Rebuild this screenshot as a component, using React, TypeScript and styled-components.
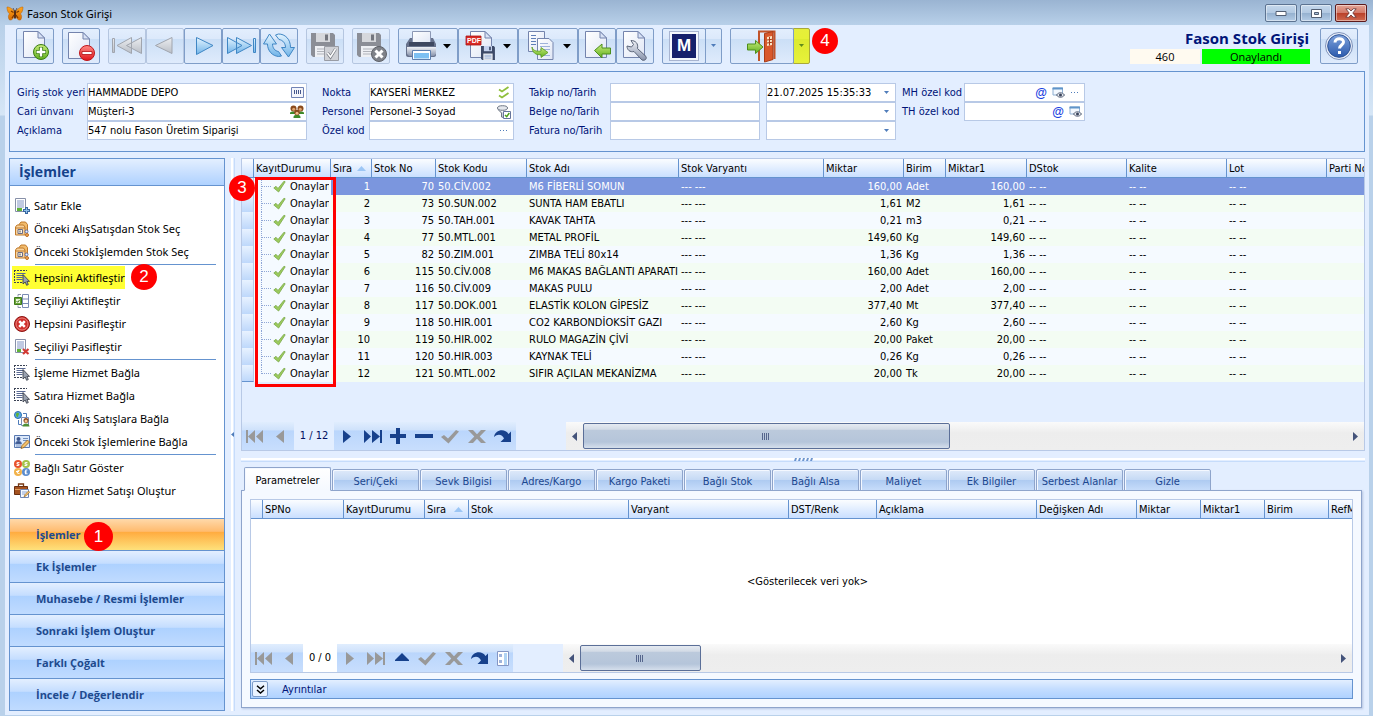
import React from "react";
import styled, { createGlobalStyle, css } from "styled-components";

const TAHOMA = '"DejaVu Sans Condensed", "DejaVu Sans", sans-serif';
const SEGOE = '"Open Sans", "Noto Sans", sans-serif';
const SEGOE_WIDE = '"Noto Sans", "Open Sans", sans-serif';
const LINE = "#6593cf";
const SOFT = "#b8c9e6";

const GlobalStyle = createGlobalStyle`
  *, *::before, *::after { box-sizing: border-box; }
  body { margin: 0; font: 11px/17px ${TAHOMA}; color: #000; background: #b9d1ea; }
  button, input { font: inherit; color: inherit; margin: 0; padding: 0; border: 0; background: none; border-radius: 0; }
  button { display: flex; align-items: center; justify-content: center; cursor: default; }
  svg { display: block; flex: none; }
`;

/* ---------- window frame ---------- */

const Window = styled.div`
  min-height: 100vh;
  display: flex;
  flex-direction: column;
  padding: 0 4px 1px 5px;
  background: linear-gradient(#b8d0e9 25px, #d6e6f6 115px, #b9d1ea 116px);
`;

const TitleBar = styled.header`
  height: 25px;
  flex: none;
  display: flex;
  align-items: flex-start;
  margin: 0 -4px 0 -5px;
  padding: 4px 6px 0 6px;
  gap: 3px;
  font: 11px/20px ${SEGOE_WIDE};
  background: linear-gradient(#9ab4d2, #b8d0e9);
  & > svg { margin-top: 2px; }
`;

const TitleText = styled.span`
  flex: 1;
`;

const WindowButton = styled.button<{ $close?: boolean }>`
  width: 32px;
  height: 18px;
  border: 1px solid ${(p) => (p.$close ? "#5c1a1c" : "#5c7391")};
  border-radius: 2px;
  box-shadow: inset 0 0 0 1px rgba(255, 255, 255, 0.45);
  background: ${(p) =>
    p.$close
      ? "linear-gradient(#e3a597, #d37a69 48%, #b93f28 50%, #cf6a50)"
      : "linear-gradient(#c5d8ec, #b2c9e2 48%, #94b0cf 50%, #b4cce6)"};
`;

const Body = styled.div`
  flex: 1;
  display: flex;
  flex-direction: column;
  background: #e3eeff;
`;

/* ---------- toolbar ---------- */

const Toolbar = styled.div`
  display: flex;
  align-items: flex-start;
  gap: 8px;
  padding: 3px 11px 7px 11px;
`;

const Group = styled.div`
  display: flex;
`;

const ToolButton = styled.button<{ $width?: number; $dim?: boolean }>`
  position: relative;
  width: ${(p) => p.$width ?? 38}px;
  height: 36px;
  justify-content: flex-start;
  border: 1px solid ${(p) => (p.$dim ? "#b5c6e0" : "#7f9dc8")};
  border-radius: 2px;
  background: linear-gradient(#e3eefd, #dce9fb 28%, #cbdff6 30%, #dfebfc);
`;

const Split = styled.button<{ $marked?: boolean }>`
  width: 17px;
  height: 36px;
  margin-left: -1px;
  border: 1px solid #7f9dc8;
  border-radius: 0 2px 2px 0;
  background: linear-gradient(#e3eefd, #dce9fb 28%, #cbdff6 30%, #dfebfc);
  ${(p) =>
    p.$marked &&
    css`
      border-color: #a9a83a;
      background: linear-gradient(#e6ef3a, #e6f036 28%, #dcea30 30%, #e8f23a);
    `}
`;

const LogoM = styled.span`
  margin-left: 6px;
  width: 30px;
  height: 30px;
  border: 1px solid #a8b4d0;
  box-shadow: inset 0 0 0 2px #f4f7fd;
  background: #16206c;
  color: #fff;
  font: bold 17px/28px "Liberation Sans", sans-serif;
  text-align: center;
`;

const DocInfo = styled.div`
  margin-left: auto;
  margin-right: 2px;
  display: grid;
  grid-template-columns: 70px 108px;
  column-gap: 2px;
  font: 11px/15px ${SEGOE};
  text-align: center;
`;

const DocTitle = styled.h1`
  grid-column: 1 / 3;
  margin: 0;
  padding-right: 1px;
  text-align: right;
  color: #001478;
  font: bold 15px/21px ${SEGOE};
`;

const DocNo = styled.span`
  background: #fffaf0;
`;

const DocState = styled.span`
  background: #00ff00;
`;

/* ---------- form ---------- */

const FormPanel = styled.form`
  margin: 0 4px 0 4px;
  height: 81px;
  padding: 11px 7px;
  display: flex;
  align-items: flex-start;
  border: 1px solid ${LINE};
`;

const FieldBlock = styled.div<{ $label: number; $gap: number }>`
  display: grid;
  grid-template-columns: ${(p) => p.$label}px auto;
  grid-auto-rows: 19px;
  align-items: center;
  margin-right: ${(p) => p.$gap}px;
  color: #001478;
  white-space: nowrap;
`;

const Box = styled.div<{ $width: number }>`
  width: ${(p) => p.$width}px;
  height: 19px;
  display: flex;
  align-items: center;
  gap: 1px;
  padding-right: 1px;
  border: 1px solid ${SOFT};
  background: #fff;
  color: #000;
`;

const BoxInput = styled.input`
  flex: 1;
  min-width: 0;
  height: 17px;
  outline: none;
`;

const BoxButton = styled.button`
  width: 16px;
  height: 16px;
  color: #2547d8;
`;

const DateCol = styled.div`
  display: grid;
  grid-auto-rows: 19px;
  margin-right: 6px;
`;

/* ---------- lower half ---------- */

const Workspace = styled.main`
  flex: 1;
  display: flex;
  padding: 6px 4px 4px 4px;
`;

const Sidebar = styled.nav`
  width: 216px;
  flex: none;
  display: flex;
  flex-direction: column;
  border: 1px solid ${LINE};
  background: #fff;
`;

const SidebarTitle = styled.h2`
  margin: 0;
  height: 27px;
  flex: none;
  padding-left: 9px;
  border-bottom: 1px solid ${LINE};
  background: linear-gradient(#e3efff, #c4ddff 60%, #afd2ff);
  color: #15428b;
  font: bold 14px/26px ${SEGOE};
`;

const SidebarList = styled.ul`
  flex: 1;
  margin: 0;
  padding: 8px 0 16px;
  list-style: none;
`;

const SidebarItem = styled.li<{ $divided?: boolean }>`
  position: relative;
  margin-top: ${(p) => (p.$divided ? 3 : 0)}px;
  padding-left: 2px;
  display: flex;
  ${(p) =>
    p.$divided &&
    css`
      &::before {
        content: "";
        position: absolute;
        left: 25px;
        right: 8px;
        top: -2px;
        border-top: 1px solid ${LINE};
      }
    `}
`;

const SidebarAction = styled.button<{ $marked?: boolean }>`
  height: 23px;
  gap: 4px;
  padding: 0 0 0 2px;
  font: 11px/23px ${SEGOE_WIDE};
  white-space: nowrap;
  background: ${(p) => (p.$marked ? "#ffff33" : "none")};
`;

const SectionButton = styled.button<{ $active?: boolean }>`
  height: 32px;
  flex: none;
  justify-content: flex-start;
  padding-left: 26px;
  border-top: 1px solid ${LINE};
  color: #1e4a8e;
  font: bold 11px/31px ${SEGOE};
  background: ${(p) =>
    p.$active
      ? "linear-gradient(#ffd9aa, #ffbb6e 40%, #ffab3f 42%, #fee17b)"
      : "linear-gradient(#e3efff, #c4ddff 40%, #add1ff 42%, #c0dbff)"};
`;

const Badge = styled.span<{ $size?: number }>`
  position: absolute;
  z-index: 2;
  width: ${(p) => p.$size ?? 26}px;
  height: ${(p) => p.$size ?? 26}px;
  border-radius: 50%;
  background: #ff0000;
  color: #fff;
  font: 17px/26px "Liberation Sans", sans-serif;
  text-align: center;
`;
const BadgeSection = styled(Badge)`
  left: 74px;
  top: 4px;
  line-height: 29px;
`;
const BadgeItem = styled(Badge)`
  left: 121px;
  top: -2px;
`;
const BadgeGrid = styled(Badge)`
  left: -13px;
  top: 16px;
`;
const BadgeExit = styled(Badge)`
  left: 82px;
  top: 0;
`;
const Anchor = styled.div`
  position: relative;
  display: flex;
  & > ${SectionButton} { flex: 1; }
`;

const SplitterV = styled.div`
  width: 16px;
  flex: none;
  display: flex;
  align-items: center;
  padding-left: 6px;
  background: linear-gradient(#fff, #fff) 6px 0 / 2px 100% no-repeat,
    linear-gradient(#c6dcfb, #c6dcfb) 9px 0 / 1px 100% no-repeat;
`;

const Content = styled.section`
  flex: 1;
  min-width: 0;
  display: flex;
  flex-direction: column;
  padding-bottom: 3px;
`;

const GridPanel = styled.div`
  position: relative;
  display: flex;
  flex-direction: column;
  border: 1px solid ${SOFT};
`;

const Table = styled.table`
  width: 100%;
  table-layout: fixed;
  border-collapse: separate;
  border-spacing: 0;
`;

const Th = styled.th`
  height: 19px;
  padding: 1px 2px 0 2px;
  overflow: hidden;
  white-space: nowrap;
  text-align: left;
  font-weight: normal;
  line-height: 17px;
  border-bottom: 1px solid ${LINE};
  border-right: 1px solid ${LINE};
  background: linear-gradient(#fbfdff, #e2eeff 50%, #c9dfff);
  &:last-child { border-right: 0; padding-right: 0; }
  & > div { display: flex; align-items: center; justify-content: space-between; padding-right: 3px; }
`;

const Td = styled.td<{ $right?: boolean; $plain?: boolean }>`
  height: 17px;
  padding: 1px 2px 0;
  line-height: 16px;
  overflow: hidden;
  white-space: nowrap;
  text-align: ${(p) => (p.$right ? "right" : "left")};
  ${(p) => p.$plain && css`&&&&& { background: #f5faff; color: #000; padding: 0 2px 0 0; }`}
`;

const Indicator = styled.td`
  padding: 0;
  border-right: 1px solid ${SOFT};
  background: linear-gradient(#e8f2ff, #bed8fb);
`;

const Row = styled.tr<{ $selected?: boolean }>`
  &:nth-child(odd) ${Td} { background: #f5faff; }
  &:nth-child(even) ${Td} { background: #f3fcf3; }
  ${(p) => p.$selected && css`&& ${Td} { background: #7b96de; color: #fff; }`}
  &:last-child ${Indicator} { border-bottom: 1px solid ${LINE}; }
`;

const StatusCell = styled.div`
  display: flex;
  align-items: center;
  height: 17px;
  overflow: hidden;
`;

const StatusText = styled.span`
  padding: 1px 0 0 3px;
`;

const MarkFrame = styled.div`
  position: absolute;
  left: 13px;
  top: 18px;
  width: 81px;
  height: 210px;
  border: 3px solid #ff0000;
`;

const Spacer = styled.div`
  height: 40px;
`;

const Navigator = styled.div`
  display: flex;
  height: 28px;
  flex: none;
`;

const NavSlot = styled.button<{ $width?: number; $on?: boolean }>`
  width: ${(p) => p.$width ?? 26}px;
  height: 100%;
  color: ${(p) => (p.$on ? "#17418c" : "#999999")};
  background: linear-gradient(#e0edfe, #cfe2fb 28%, #bad6fc 32%, #c8defd);
`;

const NavLabel = styled.span<{ $width: number; $white?: boolean }>`
  width: ${(p) => p.$width}px;
  line-height: 28px;
  text-align: center;
  background: ${(p) => (p.$white ? "#fff" : "#e3eeff")};
  color: ${(p) => (p.$white ? "#000" : "#001060")};
`;

const ScrollTrack = styled.div`
  flex: 1;
  margin-left: 50px;
  display: flex;
  background: linear-gradient(#fafafa, #ededed 40%, #eeeeee);
`;

const ScrollArrow = styled.button`
  width: 17px;
  flex: none;
  color: #44537a;
`;

const ScrollRun = styled.div`
  flex: 1;
  display: flex;
  padding: 1px 0;
`;

const Thumb = styled.div<{ $size: number }>`
  width: ${(p) => p.$size}%;
  display: flex;
  align-items: center;
  justify-content: center;
  border: 1px solid #5b6f98;
  border-radius: 2px;
  background: linear-gradient(#e5eaf1, #d3dbe6 22%, #bccadc 26%, #b5c5da 75%, #d5dfec);
`;

const SplitterH = styled.div`
  height: 16px;
  flex: none;
  display: flex;
  justify-content: center;
  align-items: center;
  background: linear-gradient(#fff, #fff) 0 7px / 100% 2px no-repeat,
    linear-gradient(#c6dcfb, #c6dcfb) 0 10px / 100% 1px no-repeat;
`;

const Tabs = styled.div`
  position: relative;
  z-index: 1;
  display: flex;
  align-items: flex-end;
  gap: 1px;
  padding-left: 3px;
  margin-bottom: -1px;
`;

const Tab = styled.button<{ $active?: boolean }>`
  width: 87px;
  height: ${(p) => (p.$active ? 24 : 22)}px;
  padding-top: 2px;
  border: 1px solid #8ea4cb;
  border-bottom-color: ${(p) => (p.$active ? "#f5f9ff" : "#8ea4cb")};
  border-radius: 2px 2px 0 0;
  box-shadow: inset 1px 1px 0 #f4f8ff;
  color: ${(p) => (p.$active ? "#000" : "#1c478f")};
  background: ${(p) =>
    p.$active
      ? "linear-gradient(#ffffff, #f5f9ff)"
      : "linear-gradient(#dfeafa, #c6daf5 48%, #adcaf1 50%, #c6dcfa)"};
`;

const TabPanel = styled.div`
  flex: 1;
  display: flex;
  flex-direction: column;
  gap: 6px;
  padding: 8px;
  margin-right: 3px;
  border: 1px solid #8ea4cb;
  box-shadow: 1px 1px 2px #b4c4e0;
  background: #f5f9ff;
`;

const DetailGrid = styled(GridPanel)`
  flex: 1;
  background: #e3eeff;
`;

const EmptyArea = styled.div`
  flex: 1;
  min-height: 80px;
  display: flex;
  align-items: center;
  justify-content: center;
  padding-left: 12px;
  background: #fff;
`;

const DetailsBar = styled.div`
  height: 20px;
  flex: none;
  display: flex;
  align-items: center;
  gap: 14px;
  padding-left: 1px;
  border: 1px solid ${LINE};
  color: #001478;
  background: linear-gradient(#e3efff, #c4ddff 50%, #afd2ff);
`;

const ExpandButton = styled.button`
  width: 16px;
  height: 16px;
  border: 1px solid #7f9dc8;
  border-radius: 2px;
  background: #eaf3ff;
  color: #000;
`;

/* ---------- icons ---------- */

const DefsSvg = styled.svg`
  position: absolute;
`;

const Defs = () => (
  <DefsSvg width="0" height="0" aria-hidden="true">
    <defs>
      <linearGradient id="gPage" x1="0" y1="0" x2="1" y2="1"><stop offset="0" stopColor="#fff" /><stop offset="1" stopColor="#dfe6f5" /></linearGradient>
      <linearGradient id="gBlue" x1="0" y1="0" x2="0" y2="1"><stop offset="0" stopColor="#e4f4ff" /><stop offset="1" stopColor="#6fb3e8" /></linearGradient>
      <linearGradient id="gGrey" x1="0" y1="0" x2="0" y2="1"><stop offset="0" stopColor="#eceef1" /><stop offset="1" stopColor="#b9bec6" /></linearGradient>
      <linearGradient id="gGreen" x1="0" y1="0" x2="0" y2="1"><stop offset="0" stopColor="#c8ec7a" /><stop offset="1" stopColor="#5fae1e" /></linearGradient>
      <linearGradient id="gRed" x1="0" y1="0" x2="0" y2="1"><stop offset="0" stopColor="#ff8a84" /><stop offset="1" stopColor="#e0161c" /></linearGradient>
      <linearGradient id="gSteel" x1="0" y1="0" x2="0" y2="1"><stop offset="0" stopColor="#f0f2f7" /><stop offset="1" stopColor="#8792ab" /></linearGradient>
      <linearGradient id="gHelp" x1="0" y1="0" x2="0" y2="1"><stop offset="0" stopColor="#7ea2dc" /><stop offset="1" stopColor="#2b59ac" /></linearGradient>
      <linearGradient id="gWing" x1="0" y1="0" x2="0" y2="1"><stop offset="0" stopColor="#ffa51c" /><stop offset="1" stopColor="#d96a00" /></linearGradient>
    </defs>
  </DefsSvg>
);

const Tool = ({ w = 36, children }: { w?: number; children: React.ReactNode }) => (
  <svg width={w} height="34" viewBox={`0 0 ${w} 34`} fill="none" aria-hidden="true">{children}</svg>
);

const Sheet = ({ x = 6, y = 2 }: { x?: number; y?: number }) => (
  <g transform={`translate(${x} ${y})`}>
    <path d="M.5.5h14.5l6.500 6.500v19.500H.5z" fill="url(#gPage)" stroke="#7484ad" />
    <path d="M15 .5v6.500h6.500z" fill="#d8e2f5" stroke="#7484ad" strokeLinejoin="round" />
  </g>
);

const Floppy = ({ x = 4, y = 4, s = 1, dark }: { x?: number; y?: number; s?: number; dark?: boolean }) => (
  <g transform={`translate(${x} ${y}) scale(${s})`}>
    <path d="M0 0h22l2 2v22H2l-2-2z" fill={dark ? "#3d4a68" : "#8b8e96"} />
    <path d="M5 0h14v9H5z" fill={dark ? "#c5d3ee" : "#d6d8dc"} />
    <path d="M14 1.500h3v6h-3z" fill={dark ? "#3d4a68" : "#73767e"} />
    <path d="M4 13h16v11H4z" fill="#eef0f4" />
    <path d="M6 16h12M6 18.500h12M6 21h12" stroke={dark ? "#6e8ec8" : "#b0b3ba"} />
  </g>
);

const DropArrow = ({ x, color = "#000" }: { x: number; color?: string }) => (
  <path d={`M${x - 1} 15h8l-4 4.500z`} fill={color} />
);

const SmallDrop = ({ color = "#4f7cba" }: { color?: string }) => (
  <svg width="7" height="4" viewBox="0 0 7 4" aria-hidden="true"><path d="M1 0h5l-2.500 3z" fill={color} /></svg>
);

const Butterfly = () => (
  <svg width="18" height="16" viewBox="0 0 18 16" aria-hidden="true">
    <path d="M8.500 6.500C7.500 3.500 4 .8 1 1c0 3 .8 5.500 2.500 6.800C2 9.500 2 12 3.500 14c2.500.5 4.500-2 5-5zM9.500 6.500C10.500 3.500 14 .8 17 1c0 3-.8 5.500-2.500 6.800 1.500 1.700 1.500 4.200 0 6.200-2.500.5-4.500-2-5-5z" fill="url(#gWing)" stroke="#b85e00" strokeWidth=".5" />
    <path d="M9 4.500v8" stroke="#4a2410" strokeWidth="1.800" />
    <path d="M8.500 5 7 2M9.500 5 11 2" stroke="#4a2410" strokeWidth=".7" />
    <path d="M8 9l-2 3M10 9l2 3M7.500 6.500 5 5M10.500 6.500 13 5" stroke="#7a3600" strokeWidth="1.200" />
  </svg>
);

const LookupList = () => (
  <svg width="13" height="11" viewBox="0 0 13 11" fill="none"><path d="M.5.5h12v10H.5z" stroke="#7183b5" fill="#f4f6fc" /><path d="M3.500 3v4M5.500 3v4M7.500 3v4M9.500 3v4" stroke="#46578c" /></svg>
);
const People = () => (
  <svg width="14" height="13" viewBox="0 0 14 13" fill="none">
    <path d="M0 8c0-2 6-2 6 0v1H0zM8 8c0-2 6-2 6 0v1H8zM3.500 12c0-3 7-3 7 0v1h-7z" fill="#3f8a2a" />
    <circle cx="3.500" cy="3.500" r="3" fill="#8a4a1c" /><circle cx="10.500" cy="3.500" r="3" fill="#8a4a1c" />
    <circle cx="3.700" cy="4.300" r="1.500" fill="#e0a46c" /><circle cx="10.300" cy="4.300" r="1.500" fill="#e0a46c" />
    <circle cx="7" cy="7.500" r="2.800" fill="#8a4a1c" /><circle cx="7" cy="8.300" r="1.500" fill="#f0bd8a" />
  </svg>
);
const DoubleTick = () => (
  <svg width="12" height="13" viewBox="0 0 12 13" fill="none" stroke="#8fbf3c" strokeWidth="1.800"><path d="M1 3.500 4 5.500 10.500 1M1 9.500l3 2L10.500 7" /></svg>
);
const Funnel = () => (
  <svg width="14" height="14" viewBox="0 0 14 14" fill="none">
    <ellipse cx="5.500" cy="3" rx="5" ry="2.300" fill="#e4e7ec" stroke="#6d7684" /><path d="M1 4.500 4.500 8v4l2 .5V8" fill="#cfd4dc" stroke="#6d7684" />
    <path d="M6.500 6.500h7v7h-7z" fill="#fff" stroke="#66759c" /><path d="m8 10 1.700 1.700L12.300 8" stroke="#4fa01c" strokeWidth="1.500" />
  </svg>
);
const Dots = () => (
  <svg width="8" height="2" viewBox="0 0 8 2" fill="#4f7cba"><path d="M0 0h1v1H0zM3 0h1v1H3zM6 0h1v1H6z" /></svg>
);
const At = styled.span`
  font: bold 12px/14px "Liberation Sans", sans-serif;
  color: #1a3fe0;
`;
const WindowEye = () => (
  <svg width="13" height="11" viewBox="0 0 13 11" fill="none">
    <path d="M1 1h9.500v7H1z" fill="#f4f9ff" stroke="#8fb0d2" /><path d="M.5.5h10.500v2H.5z" fill="#5f94c9" />
    <path d="M4.500 8c2-3 6-3 8 0-2 3-6 3-8 0z" fill="#e4e8ef" stroke="#5a6478" /><circle cx="8.500" cy="8" r="1.500" fill="#39435a" />
  </svg>
);

const Small = ({ children }: { children: React.ReactNode }) => (
  <svg width="16" height="16" viewBox="0 0 16 16" fill="none" aria-hidden="true">{children}</svg>
);
const IconRowAdd = () => (
  <Small><path d="M1.500.5h10v13h-10z" fill="#fff" stroke="#8790a8" /><path d="M3 3h7M3 5h7M3 7h7M3 9h7" stroke="#8094c4" /><path d="M3 10h5v3H3z" fill="#5fb336" /><path d="M12.500 9v7M9 12.500h7" stroke="#38679f" strokeWidth="3" /><path d="M12.500 10v5M10 12.500h5" stroke="#8fc0ea" strokeWidth="1" /></Small>
);
const IconBoxes = () => (
  <Small><path d="M5 3.500 7 1h4.500l2 2.500V10H5z" fill="#f2bb6c" stroke="#c07a2a" /><path d="M1.500 6 3 4h6.500l1.500 2v8H1.500z" fill="#f9d29a" stroke="#c07a2a" /><path d="M1.500 7H11" stroke="#c07a2a" /><path d="M4 8.500h4.500v4H4z" fill="#fff6e6" stroke="#6c6c84" /><path d="M6 9.500v2" stroke="#444" /><circle cx="12.500" cy="10.500" r="1.500" fill="#e8eefc" stroke="#5a6ea8" /><circle cx="13" cy="14" r="1.500" fill="#f6a95a" stroke="#b96c20" /></Small>
);
const IconSelect = () => (
  <Small><path d="M0 .5h13" stroke="#3a4254" strokeDasharray="2 1" /><path d="M.5 0v13M0 12.500h8" stroke="#3a4254" strokeDasharray="2 1" /><path d="M2.500 3.500h9M2.500 5.500h7M2.500 7.500h6M2.500 9.500h6" stroke="#5a6a94" /><path d="M9 4.500v9.500l2.200-2 1.400 3.300 1.700-.8-1.400-3.100h2.600z" fill="#9aa2b0" stroke="#2e3440" strokeWidth=".8" /></Small>
);
const IconCheckGrid = () => (
  <Small><path d="M8.500 1.500h6v13h-6zM8.500 6h6M8.500 10.500h6" fill="#fff" stroke="#7a8cb4" /><path d="M4 3.500V1.500h3M4 12.500v2h3" stroke="#8a93a6" /><path d="M.5 4.500h7v7h-7z" fill="#6da63a" stroke="#3e7a18" /><path d="M2 6h4v4H2z" fill="#e9f5d8" /><path d="m2.500 8 1.200 1.300L5.500 7" stroke="#3e7a18" /></Small>
);
const IconCross = () => (
  <Small><circle cx="8" cy="8" r="7.500" fill="#d0302c" stroke="#8d1512" /><circle cx="8" cy="8" r="6" stroke="#f2a29c" strokeWidth=".7" /><path d="m5.200 5.200 5.600 5.600M10.800 5.200 5.200 10.800" stroke="#fff" strokeWidth="2.600" /></Small>
);
const IconRowDel = () => (
  <Small><path d="M1.500.5h10v13h-10z" fill="#fff" stroke="#8790a8" /><path d="M3 3h7M3 5h7M3 7h7M3 9h7" stroke="#8094c4" /><path d="M3 10h4v3H3z" fill="#5fb336" /><path d="m9 10 5.500 5M14.500 10 9 15" stroke="#d23a34" strokeWidth="2.200" /></Small>
);
const IconGlobeUser = () => (
  <Small><circle cx="4" cy="4" r="3.500" fill="#5aa9e6" stroke="#2c6fae" /><path d="M2 3c1-2 3-1 3 0s-1 1-1 3c-2 0-2-2-2-3z" fill="#5fb336" /><path d="M9 2.500h3.500V6M4.500 9v4.500H9" stroke="#4f7cba" /><path d="M7.500 6.500h7v8h-7z" fill="#fff" stroke="#7a8cb4" /><circle cx="12" cy="9.500" r="2.500" fill="#8a4a1c" /><circle cx="12" cy="10" r="1.500" fill="#f4c490" /><path d="M8.500 15.500c0-4 7-4 7 0z" fill="#4f8f35" /></Small>
);
const IconCardPen = () => (
  <Small><path d="M.5 1.500h15v12H.5z" fill="#dbe8fa" stroke="#5878b0" /><circle cx="4.500" cy="5" r="2" fill="#3d568c" /><path d="M1.500 10c0-4 6-4 6 0zM9 4.500h5M9 6.500h4M2 12h5" fill="#3d568c" stroke="#5878b0" strokeWidth=".8" /><path d="m7 14.500 1-3L13.500 6l2 2-5.500 5.500z" fill="#f6c26a" stroke="#8a5a1c" strokeWidth=".8" /></Small>
);
const IconCoins = () => (
  <Small><circle cx="12" cy="4" r="4" fill="#a5c24a" /><circle cx="4" cy="12" r="4" fill="#f2b24a" /><circle cx="12" cy="12" r="4" fill="#5c8ccc" /><circle cx="4" cy="4" r="4" fill="#e8512c" /><path d="M5.500 2.800c-3-1-3 1.300-1.500 1.300s1.500 2-1.500 1.200M13.500 2.800c-3-1-3 1.300-1.500 1.300s1.500 2-1.500 1.200M5.500 10.500c-3-.5-3 3.500 0 3M2 11.500h3M13.300 10.200c-1.800-1-2 1-1.800 3.500h2M10.500 12h2.500" stroke="#fff" strokeWidth="1.100" /></Small>
);
const IconBriefcase = () => (
  <Small><path d="M4.500 3V1h5v2" stroke="#7a3a14" strokeWidth="1.300" /><path d="M.5 3.500h13v8H.5z" fill="#a4521f" stroke="#6a2f10" /><path d="M1 6.500h12" stroke="#e0a060" /><path d="M6.500 6.500h8v8h-8z" fill="#f5f9ff" stroke="#6f86b4" /><path d="M8 9h5M8 11h3" stroke="#8ca4d0" /><path d="m10 14 1-2.500L14.500 8l1.200 1.200-3.500 3.500z" fill="#f6c26a" stroke="#8a5a1c" strokeWidth=".6" /></Small>
);

const Tick = () => (
  <svg width="14" height="13" viewBox="0 0 14 13" aria-hidden="true"><path d="M.8 8 3 6.300 5 8.500 11 1.200l1.200.6L5.600 12z" fill="#9ccb5c" stroke="#7aa84a" strokeWidth=".8" /></svg>
);
const Branch = ({ last }: { last: boolean }) => (
  <svg width="19" height="17" viewBox="0 0 19 17" fill="none" aria-hidden="true"><path d={`M7.500 0v${last ? 9 : 17}M8 8.500h9`} stroke="#8fa6d6" strokeDasharray="1 1" /></svg>
);
const SortUp = () => (
  <svg width="9" height="5" viewBox="0 0 9 5" aria-hidden="true"><path d="M4.500 0 9 5H0z" fill="#9cc6f5" /></svg>
);

const glyphs: Record<string, React.ReactNode> = {
  first: <path d="M1 2h2v13H1zM10 2v13L3 8.500zM18 2v13l-7-6.500z" fill="currentColor" />,
  prev: <path d="M13 2v13L5 8.500z" fill="currentColor" />,
  next: <path d="M6 2v13l8-6.500z" fill="currentColor" />,
  last: <path d="M17 2h2v13h-2zM1 2v13l7-6.500zM9 2v13l8-6.500z" fill="currentColor" />,
  plus: <path d="M7 0h4v6h6v4h-6v6H7v-6H1V6h6z" fill="currentColor" />,
  minus: <path d="M0 6h18v4H0z" fill="currentColor" />,
  up: <path d="M10 3l7 7v1H3v-1z" fill="currentColor" />,
  ok: <path d="M0 9l3-2 4 3.500L15 2l3 1.500L7.500 15.500z" fill="currentColor" />,
  cancel: <path d="M1 2h5l4 4.300L14 2h5l-6.300 6.500L19 15h-5l-4-4.300L6 15H1l6.300-6.500z" fill="currentColor" />,
  redo: <path d="M1 9C2 1.500 12 0 15.500 6L18 3.500v10.500H7.500l3.500-3.500C9.500 6.500 5 5 1 9z" fill="currentColor" />,
  form: <g fill="none"><path d="M4.500 1.500h11v14h-11z" fill="#fff" stroke="#8496c4" /><path d="M6 4h3v3H6zM6 10h3v3H6z" fill="#9fb4dc" /><path d="M11 4h3M11 6h3M11 8h3M11 10h3M11 12h3M11 14h3" stroke="#62a8e8" /></g>,
};
const Glyph = ({ name }: { name: string }) => (
  <svg width="20" height="17" viewBox="0 0 20 17" aria-hidden="true">{glyphs[name]}</svg>
);

/* ---------- data ---------- */

const rows: [string, string, string, string, string, string][] = [
  ["1", "70", "50.CİV.002", "M6 FİBERLİ SOMUN", "160,00", "Adet"],
  ["2", "73", "50.SUN.002", "SUNTA HAM EBATLI", "1,61", "M2"],
  ["3", "75", "50.TAH.001", "KAVAK TAHTA", "0,21", "m3"],
  ["4", "77", "50.MTL.001", "METAL PROFİL", "149,60", "Kg"],
  ["5", "82", "50.ZIM.001", "ZIMBA TELİ 80x14", "1,36", "Kg"],
  ["6", "115", "50.CİV.008", "M6 MAKAS BAĞLANTI APARATI", "160,00", "Adet"],
  ["7", "116", "50.CİV.009", "MAKAS PULU", "2,00", "Adet"],
  ["8", "117", "50.DOK.001", "ELASTİK KOLON GİPESİZ", "377,40", "Mt"],
  ["9", "118", "50.HIR.001", "CO2 KARBONDİOKSİT GAZI", "2,60", "Kg"],
  ["10", "119", "50.HIR.002", "RULO MAGAZİN ÇİVİ", "20,00", "Paket"],
  ["11", "120", "50.HIR.003", "KAYNAK TELİ", "0,26", "Kg"],
  ["12", "121", "50.MTL.002", "SIFIR AÇILAN MEKANİZMA", "20,00", "Tk"],
];

type Column = [string, number | undefined];
const stockColumns: Column[] = [
  ["", 12], ["KayıtDurumu", 77], ["Sıra", 41], ["Stok No", 64], ["Stok Kodu", 91], ["Stok Adı", 152],
  ["Stok Varyantı", 145], ["Miktar", 80], ["Birim", 42], ["Miktar1", 81], ["DStok", 100], ["Kalite", 100],
  ["Lot", 100], ["Parti No", undefined],
];
const detailColumns: Column[] = [
  ["", 12], ["SPNo", 81], ["KayıtDurumu", 81], ["Sıra", 44], ["Stok", 160], ["Varyant", 160], ["DST/Renk", 88],
  ["Açıklama", 160], ["Değişken Adı", 100], ["Miktar", 64], ["Miktar1", 64], ["Birim", 64], ["RefMiktar", undefined],
];

const actions: { icon: React.ReactNode; text: string; divided?: boolean; marked?: boolean }[] = [
  { icon: <IconRowAdd />, text: "Satır Ekle" },
  { icon: <IconBoxes />, text: "Önceki AlışSatışdan Stok Seç" },
  { icon: <IconBoxes />, text: "Önceki Stokİşlemden Stok Seç" },
  { icon: <IconSelect />, text: "Hepsini Aktifleştir", divided: true, marked: true },
  { icon: <IconCheckGrid />, text: "Seçiliyi Aktifleştir" },
  { icon: <IconCross />, text: "Hepsini Pasifleştir" },
  { icon: <IconRowDel />, text: "Seçiliyi Pasifleştir" },
  { icon: <IconSelect />, text: "İşleme Hizmet Bağla", divided: true },
  { icon: <IconSelect />, text: "Satıra Hizmet Bağla" },
  { icon: <IconGlobeUser />, text: "Önceki Alış Satışlara Bağla" },
  { icon: <IconCardPen />, text: "Önceki Stok İşlemlerine Bağla" },
  { icon: <IconCoins />, text: "Bağlı Satır Göster", divided: true },
  { icon: <IconBriefcase />, text: "Fason Hizmet Satışı Oluştur" },
];

const sections = ["İşlemler", "Ek İşlemler", "Muhasebe / Resmi İşlemler", "Sonraki İşlem Oluştur", "Farklı Çoğalt", "İncele / Değerlendir"];
const tabs = ["Parametreler", "Seri/Çeki", "Sevk Bilgisi", "Adres/Kargo", "Kargo Paketi", "Bağlı Stok", "Bağlı Alsa", "Maliyet", "Ek Bilgiler", "Serbest Alanlar", "Gizle"];

/* ---------- parts ---------- */

const Col = styled.col<{ $width?: number }>`
  width: ${(p) => (p.$width ? `${p.$width}px` : "auto")};
`;

const Head = ({ columns }: { columns: Column[] }) => (
  <>
    <colgroup>{columns.map(([n, w]) => <Col key={n} $width={w} />)}</colgroup>
    <thead>
      <tr>
        {columns.map(([n]) => (
          <Th key={n} scope="col">{n === "Sıra" ? <div>{n}<SortUp /></div> : n}</Th>
        ))}
      </tr>
    </thead>
  </>
);

const Scroll = ({ size }: { size: number }) => (
  <ScrollTrack>
    <ScrollArrow type="button" aria-label="Sola kaydır"><svg width="5" height="9" viewBox="0 0 5 9"><path d="M5 0v9L0 4.500z" fill="currentColor" /></svg></ScrollArrow>
    <ScrollRun>
      <Thumb $size={size}>
        <svg width="8" height="7" viewBox="0 0 8 7"><path d="M.5 0v7M2.500 0v7M4.500 0v7M6.500 0v7" stroke="#55658c" /></svg>
      </Thumb>
    </ScrollRun>
    <ScrollArrow type="button" aria-label="Sağa kaydır"><svg width="5" height="9" viewBox="0 0 5 9"><path d="M0 0v9l5-4.500z" fill="currentColor" /></svg></ScrollArrow>
  </ScrollTrack>
);

const Field = ({ id, label, value = "", width, children }: { id: string; label: string; value?: string; width: number; children?: React.ReactNode }) => (
  <>
    <label htmlFor={id}>{label}</label>
    <Box $width={width}>
      <BoxInput id={id} defaultValue={value} />
      {children}
    </Box>
  </>
);

const DateField = ({ label, value = "" }: { label: string; value?: string }) => (
  <Box $width={130}>
    <BoxInput aria-label={label} defaultValue={value} />
    <BoxButton type="button" aria-label="Takvimi aç"><SmallDrop /></BoxButton>
  </Box>
);

const Lookup = ({ name, children }: { name: string; children: React.ReactNode }) => (
  <BoxButton type="button" aria-label={name}>{children}</BoxButton>
);

export default function App() {
  return (
    <Window>
      <GlobalStyle />
      <Defs />
      <TitleBar>
        <Butterfly />
        <TitleText>Fason Stok Girişi</TitleText>
        <WindowButton aria-label="Simge durumuna küçült"><svg width="12" height="5" viewBox="0 0 12 5"><path d="M1 .5h10v4H1z" fill="#fff" stroke="#525f73" /></svg></WindowButton>
        <WindowButton aria-label="Önceki boyut"><svg width="11" height="9" viewBox="0 0 11 9"><path d="M.5.5h10v8H.5z" fill="#fff" stroke="#525f73" /><path d="M3.500 3.500h4v2h-4z" fill="#a9c0da" stroke="#525f73" /></svg></WindowButton>
        <WindowButton $close aria-label="Kapat"><svg width="12" height="10" viewBox="0 0 12 10"><path d="M.8.8h3L6 3 8.200.8h3L7.800 5l3.400 4.200h-3L6 7 3.800 9.200h-3L4.200 5z" fill="#fff" stroke="#5f3030" strokeWidth=".8" /></svg></WindowButton>
      </TitleBar>

      <Body>
        <Toolbar>
          <ToolButton aria-label="Yeni"><Tool><Sheet /><circle cx="24" cy="23" r="7.500" fill="url(#gGreen)" stroke="#3b7d12" /><path d="M24 18v10M19 23h10" stroke="#3b7d12" strokeWidth="4.200" /><path d="M24 18.600v8.800M19.600 23h8.800" stroke="#fff" strokeWidth="2.400" /></Tool></ToolButton>
          <ToolButton aria-label="Sil"><Tool><Sheet x={5} y={3} /><circle cx="24" cy="24" r="7.500" fill="url(#gRed)" stroke="#c01418" /><path d="M19 22.500h10v3H19z" fill="#fff" stroke="#b01014" strokeWidth=".8" /></Tool></ToolButton>
          <Group>
            <ToolButton $dim aria-label="İlk kayıt"><Tool><g fill="url(#gGrey)" stroke="#a0a5ae"><path d="M3.500 9.500h2v14h-2zM22.500 8.500v16L8 16.500zM32.500 8.500v16L17.500 16.500z" /></g></Tool></ToolButton>
            <ToolButton $dim aria-label="Önceki kayıt"><Tool><path d="M25 8.500v16L8.500 16.500z" fill="url(#gGrey)" stroke="#a0a5ae" /></Tool></ToolButton>
            <ToolButton aria-label="Sonraki kayıt"><Tool><path d="M11.500 8.500v17L28 16.500z" fill="url(#gBlue)" stroke="#3f86c4" /></Tool></ToolButton>
            <ToolButton aria-label="Son kayıt"><Tool><g fill="url(#gBlue)" stroke="#3f86c4"><path d="M4.500 8.500v16L19 16.500zM13.500 8.500v16L28.500 16.500zM30.500 9.500h2v14h-2z" /></g></Tool></ToolButton>
            <ToolButton aria-label="Yenile"><Tool><g fill="url(#gBlue)" stroke="#3f86c4" strokeLinejoin="round"><path d="M8.500 5 2.500 15h4c0 7 5 12 11 12.500l3-.5-3-4.500c-4-.5-6-4-6-7.500h4z" /><path d="M27.500 28l6-9.500h-4C29.500 10 24 5 17.500 5l-3 1 3.500 4.500c4 .5 6.500 4 6.500 8h-4z" /></g></Tool></ToolButton>
          </Group>
          <ToolButton $dim aria-label="Kaydet"><Tool><Floppy /><path d="M17.500 17.500h14v14h-14z" fill="#cfd1d6" stroke="#999ca4" /><path d="m20.500 24 3 4 5-8" stroke="#7d8088" strokeWidth="3" /><path d="m20.500 24 3 4 5-8" stroke="#fff" strokeWidth="1.500" /></Tool></ToolButton>
          <ToolButton $dim aria-label="Kaydetmeden vazgeç"><Tool><Floppy /><circle cx="26" cy="25" r="7.500" fill="#7f8289" stroke="#5f6269" /><path d="m22.500 21.500 7 7M29.500 21.500l-7 7" stroke="#fff" strokeWidth="3" /></Tool></ToolButton>
          <Group>
            <ToolButton $width={60} aria-label="Yazdır">
              <Tool w={58}><path d="M13.500 2.500h18v12h-18z" fill="url(#gPage)" stroke="#8c98b4" /><path d="M11 9h2v5h19V9h2l3 6v11c0 1-1 2-2 2H9c-1 0-2-1-2-2V15z" fill="#67728c" /><path d="M8 18h29v7l-2 2H10l-2-2z" fill="url(#gSteel)" /><path d="M10 13h25v4H10z" fill="#3e4860" /><path d="M13.500 21.500h18v9h-18z" fill="#fff" stroke="#5d7fae" /><path d="M15 24h15v5.500H15z" fill="#7cc0f2" /><DropArrow x={45} /></Tool>
            </ToolButton>
            <ToolButton $width={60} aria-label="PDF olarak kaydet">
              <Tool w={58}><Sheet x={11} y={2} /><path d="M7 7h15v9H7z" fill="#d92a26" stroke="#a81512" strokeWidth=".8" /><text x="8" y="14" fontFamily="Liberation Sans, sans-serif" fontWeight="bold" fontSize="7" fill="#fff">PDF</text><Floppy x={22} y={17} s={0.58} dark /><DropArrow x={45} /></Tool>
            </ToolButton>
            <ToolButton $width={60} aria-label="Kopyala">
              <Tool w={58}><path d="M9.500 2.500h16v20h-16z" fill="url(#gPage)" stroke="#7484ad" /><path d="M12 6.500h5M12 9.500h5M12 12.500h5M12 15.500h5" stroke="#5f7fb8" /><path d="M18.500 9.500H30l4 4v17H18.500z" fill="url(#gPage)" stroke="#7484ad" /><path d="M21 14.500h8M21 17.500h10M21 20.500h10M21 26.500h10" stroke="#9fb2da" /><path d="M13 18c1 4 5 4.500 9 4v-3.500l7 5-7 5V25.500c-5 1-9-2-9-7.500z" fill="url(#gGreen)" stroke="#5a9a1e" strokeWidth=".8" /><DropArrow x={45} /></Tool>
            </ToolButton>
            <ToolButton aria-label="İçe aktar"><Tool><Sheet /><path d="M15.500 21.500 23 15v4h8.500v6H23v4z" fill="url(#gGreen)" stroke="#4c8f1c" /></Tool></ToolButton>
            <ToolButton aria-label="Ayarlar"><Tool><Sheet /><path d="M14 11.500l2.500 4-2 2.500-4.500-1c0 4 3 6.500 7 5.500l8 8.500c3 1 5-1 4-3.500l-8.500-8c1-5-2-8-6.500-8z" fill="url(#gSteel)" stroke="#5a6478" /></Tool></ToolButton>
          </Group>
          <Group>
            <ToolButton $width={44} aria-label="M"><LogoM>M</LogoM></ToolButton>
            <Split aria-label="M seçenekleri"><SmallDrop /></Split>
          </Group>
          <Anchor>
            <ToolButton $width={64} aria-label="Çıkış">
              <Tool w={62}><path d="M28 32V2.500h15.500V30" stroke="#c2532a" strokeWidth="2" /><path d="M33.500 4.500 42 2.500v28l-8.500 2.500z" fill="#d9582c" stroke="#a83c18" /><path d="M36 8l5-1v9l-5 1z" fill="#fbe3c4" /><path d="M38.500 8v8.500M36 11l5-.7M36 14l5-.7" stroke="#a83c18" /><path d="M16.500 15h8v-3.500l7.500 6.500-7.500 6.500V21h-8z" fill="url(#gGreen)" stroke="#4c8f1c" /></Tool>
            </ToolButton>
            <Split $marked aria-label="Çıkış seçenekleri"><SmallDrop color="#5f8a1c" /></Split>
            <BadgeExit>4</BadgeExit>
          </Anchor>
          <DocInfo>
            <DocTitle>Fason Stok Girişi</DocTitle>
            <DocNo>460</DocNo>
            <DocState>Onaylandı</DocState>
          </DocInfo>
          <ToolButton aria-label="Yardım">
            <Tool><circle cx="18" cy="17" r="13.500" fill="#e9eef8" stroke="#7f93bb" /><circle cx="18" cy="17" r="11.300" fill="url(#gHelp)" stroke="#2f5596" /><path d="M14 13.500c0-5 8.500-5 8.500-.5 0 3-4 3-4 6.500M18.500 22v3" stroke="#fff" strokeWidth="3" /></Tool>
          </ToolButton>
        </Toolbar>

        <FormPanel>
          <FieldBlock $label={70} $gap={15}>
            <Field id="depo" label="Giriş stok yeri" value="HAMMADDE DEPO" width={220}><Lookup name="Depo seç"><LookupList /></Lookup></Field>
            <Field id="cari" label="Cari ünvanı" value="Müşteri-3" width={220}><Lookup name="Cari seç"><People /></Lookup></Field>
            <Field id="aciklama" label="Açıklama" value="547 nolu Fason Üretim Siparişi" width={220} />
          </FieldBlock>
          <FieldBlock $label={47} $gap={15}>
            <Field id="nokta" label="Nokta" value="KAYSERİ MERKEZ" width={145}><Lookup name="Nokta seç"><DoubleTick /></Lookup></Field>
            <Field id="personel" label="Personel" value="Personel-3 Soyad" width={145}><Lookup name="Personel seç"><Funnel /></Lookup></Field>
            <Field id="ozel" label="Özel kod" width={145}><Lookup name="Kod seç"><Dots /></Lookup></Field>
          </FieldBlock>
          <FieldBlock $label={81} $gap={6}>
            <Field id="takip" label="Takip no/Tarih" width={150} />
            <Field id="belge" label="Belge no/Tarih" width={150} />
            <Field id="fatura" label="Fatura no/Tarih" width={150} />
          </FieldBlock>
          <DateCol>
            <DateField label="Takip tarihi" value="21.07.2025 15:35:33" />
            <DateField label="Belge tarihi" />
            <DateField label="Fatura tarihi" />
          </DateCol>
          <FieldBlock $label={62} $gap={0}>
            <Field id="mh" label="MH özel kod" width={121}>
              <Lookup name="MH e-posta"><At>@</At></Lookup><Lookup name="MH görüntüle"><WindowEye /></Lookup><Lookup name="MH kod seç"><Dots /></Lookup>
            </Field>
            <Field id="th" label="TH özel kod" width={121}>
              <Lookup name="TH e-posta"><At>@</At></Lookup><Lookup name="TH görüntüle"><WindowEye /></Lookup>
            </Field>
          </FieldBlock>
        </FormPanel>

        <Workspace>
          <Sidebar>
            <SidebarTitle>İşlemler</SidebarTitle>
            <SidebarList>
              {actions.map((a) => (
                <SidebarItem key={a.text} $divided={a.divided}>
                  <SidebarAction $marked={a.marked}>{a.icon}{a.text}</SidebarAction>
                  {a.marked && <BadgeItem>2</BadgeItem>}
                </SidebarItem>
              ))}
            </SidebarList>
            {sections.map((s, i) => (
              <Anchor key={s}>
                <SectionButton $active={i === 0}>{s}</SectionButton>
                {i === 0 && <BadgeSection $size={29}>1</BadgeSection>}
              </Anchor>
            ))}
          </Sidebar>

          <SplitterV><svg width="4" height="5" viewBox="0 0 4 5"><path d="M3 0v5L0 2.500z" fill="#4f7cba" /></svg></SplitterV>

          <Content>
            <GridPanel>
              <Table>
                <Head columns={stockColumns} />
                <tbody>
                  {rows.map(([no, stok, code, name, qty, unit], i) => (
                    <Row key={no} $selected={i === 0}>
                      <Indicator />
                      <Td $plain>
                        <StatusCell><Branch last={i === rows.length - 1} /><Tick /><StatusText>Onaylandı</StatusText></StatusCell>
                      </Td>
                      <Td $right>{no}</Td>
                      <Td $right>{stok}</Td>
                      <Td>{code}</Td>
                      <Td>{name}</Td>
                      <Td>--- ---</Td>
                      <Td $right>{qty}</Td>
                      <Td>{unit}</Td>
                      <Td $right>{qty}</Td>
                      <Td>-- --</Td>
                      <Td>-- --</Td>
                      <Td>-- --</Td>
                      <Td />
                    </Row>
                  ))}
                </tbody>
              </Table>
              <MarkFrame />
              <BadgeGrid>3</BadgeGrid>
              <Spacer />
              <Navigator>
                <NavSlot aria-label="İlk"><Glyph name="first" /></NavSlot>
                <NavSlot aria-label="Önceki"><Glyph name="prev" /></NavSlot>
                <NavLabel $width={40}>1 / 12</NavLabel>
                <NavSlot $on aria-label="Sonraki"><Glyph name="next" /></NavSlot>
                <NavSlot $on aria-label="Son"><Glyph name="last" /></NavSlot>
                <NavSlot $on aria-label="Ekle"><Glyph name="plus" /></NavSlot>
                <NavSlot $on aria-label="Çıkar"><Glyph name="minus" /></NavSlot>
                <NavSlot aria-label="Onayla"><Glyph name="ok" /></NavSlot>
                <NavSlot aria-label="İptal"><Glyph name="cancel" /></NavSlot>
                <NavSlot $on aria-label="Tazele"><Glyph name="redo" /></NavSlot>
                <Scroll size={48} />
              </Navigator>
            </GridPanel>

            <SplitterH><svg width="20" height="3" viewBox="0 0 20 3"><path d="M1 3 2 0h2L3 3zM5 3l1-3h2L7 3zM9 3l1-3h2l-1 3zM13 3l1-3h2l-1 3zM17 3l1-3h2l-1 3z" fill="#6f96cf" /></svg></SplitterH>

            <Tabs role="tablist">
              {tabs.map((t, i) => (
                <Tab key={t} role="tab" aria-selected={i === 0} $active={i === 0}>{t}</Tab>
              ))}
            </Tabs>
            <TabPanel>
              <DetailGrid>
                <Table><Head columns={detailColumns} /></Table>
                <EmptyArea>&lt;Gösterilecek veri yok&gt;</EmptyArea>
                <Navigator>
                  <NavSlot aria-label="İlk"><Glyph name="first" /></NavSlot>
                  <NavSlot aria-label="Önceki"><Glyph name="prev" /></NavSlot>
                  <NavLabel $width={34} $white>0 / 0</NavLabel>
                  <NavSlot aria-label="Sonraki"><Glyph name="next" /></NavSlot>
                  <NavSlot aria-label="Son"><Glyph name="last" /></NavSlot>
                  <NavSlot $on aria-label="Düzenle"><Glyph name="up" /></NavSlot>
                  <NavSlot aria-label="Onayla"><Glyph name="ok" /></NavSlot>
                  <NavSlot aria-label="İptal"><Glyph name="cancel" /></NavSlot>
                  <NavSlot $on aria-label="Tazele"><Glyph name="redo" /></NavSlot>
                  <NavSlot $width={20} aria-label="Form"><Glyph name="form" /></NavSlot>
                  <Scroll size={16} />
                </Navigator>
              </DetailGrid>
              <DetailsBar>
                <ExpandButton aria-label="Ayrıntıları aç"><svg width="9" height="9" viewBox="0 0 9 9" fill="none" stroke="#000" strokeWidth="1.500"><path d="m1 .8 3.500 3L8 .8M1 5l3.500 3L8 5" /></svg></ExpandButton>
                Ayrıntılar
              </DetailsBar>
            </TabPanel>
          </Content>
        </Workspace>
      </Body>
    </Window>
  );
}
